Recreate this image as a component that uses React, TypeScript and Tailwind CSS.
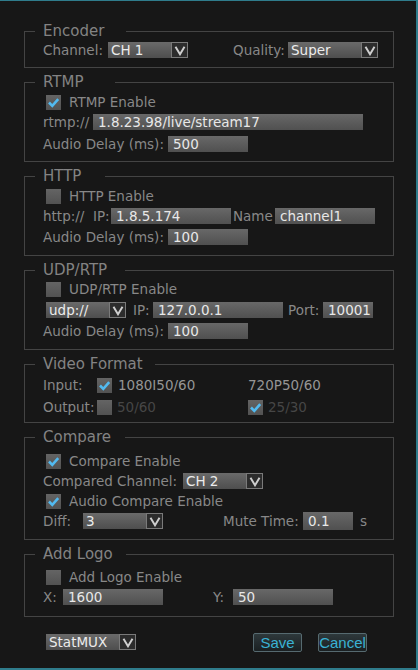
import React from 'react';

const font = { fontFamily: '"DejaVu Sans", Verdana, sans-serif' };

function Arrow() {
  return (
    <svg viewBox="0 0 16 14" className="w-[12px] h-[11px]">
      <path d="M2 2 L8 12 L14 2" fill="none" stroke="#cfcfcf" strokeWidth="2.6" strokeLinejoin="miter" />
    </svg>
  );
}

function Select({ value, w }: { value: string; w: string }) {
  return (
    <div className={`${w} h-[16px] flex items-stretch bg-gradient-to-b from-[#6a6a6a] to-[#4e4e4e]`}>
      <span className="flex-1 pl-[3px] text-[13.5px] leading-[16px] text-[#ececec] whitespace-nowrap overflow-hidden">
        {value}
      </span>
      <span className="w-[17px] flex items-center justify-center border border-[#7a7a7a] bg-[#2c2c2c]">
        <Arrow />
      </span>
    </div>
  );
}

function Field({ value, w, h = 'h-[16px]' }: { value: string; w: string; h?: string }) {
  return (
    <div
      className={`${w} ${h} flex items-center pl-[5px] bg-gradient-to-b from-[#686868] to-[#505050] text-[13.5px] text-[#e8e8e8] whitespace-nowrap overflow-hidden`}
    >
      {value}
    </div>
  );
}

function Check({ on }: { on?: boolean }) {
  return (
    <span className="w-[15px] h-[15px] shrink-0 flex items-center justify-center bg-gradient-to-b from-[#646464] to-[#525252]">
      {on && (
        <svg viewBox="0 0 15 15" className="w-[15px] h-[15px]">
          <path d="M3 7.5 L6.3 10.8 L12.2 4.2" fill="none" stroke="#52baf0" strokeWidth="2.6" />
        </svg>
      )}
    </span>
  );
}

function Group({
  title,
  legendW,
  className,
  children,
}: {
  title: string;
  legendW: string;
  className: string;
  children: React.ReactNode;
}) {
  return (
    <fieldset className="w-[370px] ml-[24px] mt-[5px] border border-[#444444]">
      <legend className={`${legendW} ml-[10px] pl-[8px] text-[15px] leading-[18px] text-[#838383] whitespace-nowrap`}>
        {title}
      </legend>
      <div className={`pl-[18px] flex flex-col ${className}`}>{children}</div>
    </fieldset>
  );
}

const row = 'h-[20px] flex items-center text-[13.5px] text-[#888888] whitespace-nowrap';

export default function App() {
  return (
    <div
      style={font}
      className="w-[418px] h-[670px] bg-[#171717] border-t border-r-2 border-b-2 border-[#2f7c8c] overflow-hidden"
    >
      <div className="h-[16px]" />

      <Group title="Encoder" legendW="w-[91px]" className="pb-[7px]">
        <div className={`${row} h-[18px]`}>
          <span className="w-[65px]">Channel:</span>
          <Select value="CH 1" w="w-[80px]" />
          <span className="w-[55px] ml-[45px]">Quality:</span>
          <Select value="Super" w="w-[90px]" />
        </div>
      </Group>

      <Group title="RTMP" legendW="w-[80px]" className="pt-[1px] pb-[7px]">
        <div className={row}>
          <span className="ml-[3px] mr-[8px] flex"><Check on /></span>
          RTMP Enable
        </div>
        <div className={row}>
          <span className="w-[50px]">rtmp://</span>
          <Field value="1.8.23.98/live/stream17" w="w-[270px]" />
        </div>
        <div className={`${row} mt-[2px]`}>
          <span className="w-[125px]">Audio Delay (ms):</span>
          <Field value="500" w="w-[80px]" />
        </div>
      </Group>

      <Group title="HTTP" legendW="w-[70px]" className="pt-[1px] pb-[8px]">
        <div className={row}>
          <span className="ml-[3px] mr-[8px] flex"><Check /></span>
          HTTP Enable
        </div>
        <div className={row}>
          <span className="w-[50px]">http://</span>
          <span className="w-[18px]">IP:</span>
          <Field value="1.8.5.174" w="w-[120px]" />
          <span className="w-[42px] ml-[2px]">Name</span>
          <Field value="channel1" w="w-[100px]" />
        </div>
        <div className={`${row} mt-[1px]`}>
          <span className="w-[125px]">Audio Delay (ms):</span>
          <Field value="100" w="w-[80px]" />
        </div>
      </Group>

      <Group title="UDP/RTP" legendW="w-[90px]" className="pb-[8px]">
        <div className={row}>
          <span className="ml-[3px] mr-[8px] flex"><Check /></span>
          UDP/RTP Enable
        </div>
        <div className={`${row} mt-[1px]`}>
          <span className="ml-[3px]"><Select value="udp://" w="w-[80px]" /></span>
          <span className="w-[20px] ml-[7px]">IP:</span>
          <Field value="127.0.0.1" w="w-[130px]" />
          <span className="w-[35px] ml-[5px]">Port:</span>
          <Field value="10001" w="w-[50px]" />
        </div>
        <div className={`${row} mt-[1px]`}>
          <span className="w-[125px]">Audio Delay (ms):</span>
          <Field value="100" w="w-[80px]" />
        </div>
      </Group>

      <Group title="Video Format" legendW="w-[120px]" className="pt-[2px] pb-[5px]">
        <div className={row}>
          <span className="w-[54px]">Input:</span>
          <span className="w-[151px] flex items-center text-[#959595]">
            <Check on />
            <span className="ml-[6px]">1080I50/60</span>
          </span>
          <span className="text-[#959595]">720P50/60</span>
        </div>
        <div className={`${row} mt-[2px]`}>
          <span className="w-[54px]">Output:</span>
          <span className="w-[151px] flex items-center text-[#464646]">
            <Check />
            <span className="ml-[5px]">50/60</span>
          </span>
          <span className="flex items-center text-[#464646]">
            <Check on />
            <span className="ml-[5px]">25/30</span>
          </span>
        </div>
      </Group>

      <Group title="Compare" legendW="w-[90px]" className="pt-[5px] pb-[8px]">
        <div className={row}>
          <span className="ml-[3px] mr-[8px] flex"><Check on /></span>
          Compare Enable
        </div>
        <div className={row}>
          <span className="w-[140px]">Compared Channel:</span>
          <Select value="CH 2" w="w-[80px]" />
        </div>
        <div className={row}>
          <span className="ml-[3px] mr-[8px] flex"><Check on /></span>
          Audio Compare Enable
        </div>
        <div className={row}>
          <span className="w-[40px]">Diff:</span>
          <Select value="3" w="w-[80px]" />
          <span className="w-[80px] ml-[60px]">Mute Time:</span>
          <Field value="0.1" w="w-[50px]" h="h-[18px]" />
          <span className="ml-[7px]">s</span>
        </div>
      </Group>

      <Group title="Add Logo" legendW="w-[91px]" className="pt-[4px] pb-[9px]">
        <div className={row}>
          <span className="ml-[3px] mr-[8px] flex"><Check /></span>
          Add Logo Enable
        </div>
        <div className={row}>
          <span className="w-[20px]">X:</span>
          <Field value="1600" w="w-[100px]" />
          <span className="w-[20px] ml-[50px]">Y:</span>
          <Field value="50" w="w-[100px]" />
        </div>
      </Group>

      <div className="h-[20px] mt-[15px] flex items-center">
        <span className="ml-[46px]">
          <Select value="StatMUX" w="w-[90px]" />
        </span>
        <button
          style={{ fontFamily: '"Liberation Sans", Arial, sans-serif' }}
          className="ml-[117px] w-[49px] h-[19px] rounded-[2px] border border-[#566a70] bg-gradient-to-b from-[#2e383b] to-[#1a2022] text-[15px] leading-[17px] text-[#3ab2d4]"
        >
          Save
        </button>
        <button
          style={{ fontFamily: '"Liberation Sans", Arial, sans-serif' }}
          className="ml-[16px] w-[49px] h-[19px] rounded-[2px] border border-[#566a70] bg-gradient-to-b from-[#2e383b] to-[#1a2022] text-[15px] leading-[17px] text-[#3ab2d4]"
        >
          Cancel
        </button>
      </div>
    </div>
  );
}
